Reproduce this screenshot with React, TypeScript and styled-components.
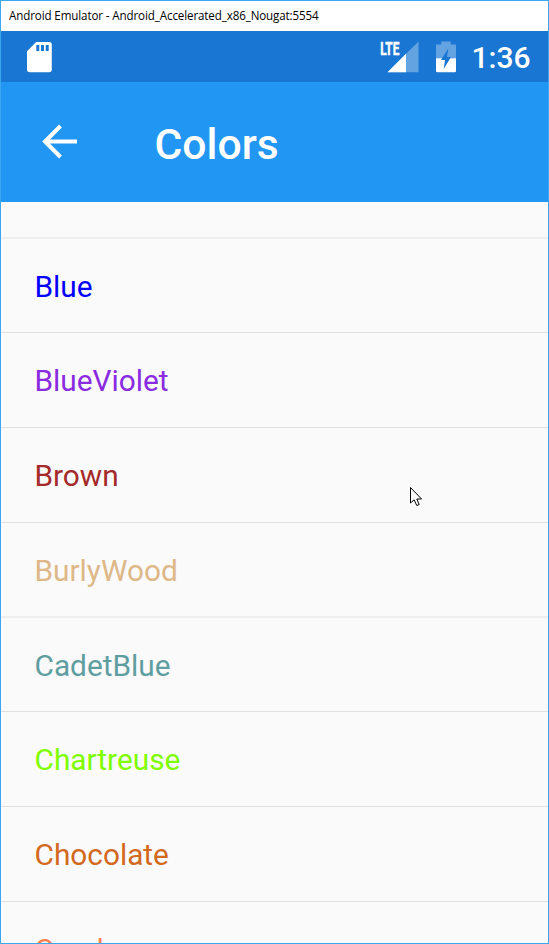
import React from "react";
import styled, { createGlobalStyle } from "styled-components";

const Global = createGlobalStyle`
  * { box-sizing: border-box; }
  html, body { margin: 0; padding: 0; overflow: hidden; }
`;
const Window = styled.main`
  position: relative; width: 549px; height: 944px; overflow: hidden;
  display: flex; flex-direction: column; background: #fafafa;
  border: 1px solid #3ba7ee; font-family: Roboto, sans-serif;
`;
const TitleBar = styled.div`
  flex: none; height: 30px; padding-left: 8px; background: #fff; color: #000;
  font: 12px/30px "Open Sans", "Noto Sans", sans-serif; white-space: nowrap;
`;
const TitleText = styled.span`
  display: inline-block; letter-spacing: -0.12px; transform: scaleX(0.966); transform-origin: 0 50%;
`;
const StatusBar = styled.div`
  flex: none; height: 51px; background: #1976d2; display: flex; align-items: center;
  padding: 0 17.5px 0 26px; color: #fff;
`;
const StatusIcons = styled.div` margin-left: auto; display: flex; align-items: center; gap: 17px; `;
const SignalIcon = styled.svg` overflow: visible; `;
const Clock = styled.span` font-size: 30px; font-weight: 500; line-height: 51px; margin: 2px 0 0 15px; `;
const AppBar = styled.header`
  flex: none; height: 120px; background: #2196f3; color: #fff; display: flex; align-items: center; padding-left: 41px;
`;
const Title = styled.h1` margin: 3px 0 0 76.5px; font-size: 42.7px; line-height: 50px; font-weight: 500; `;
const List = styled.ul` list-style: none; margin: 0; padding: 35.3px 0 0; flex: none; `;
const Row = styled.li<{ $color: string; $soft?: boolean }>`
  height: 94.78px; padding: 0 33.5px; color: ${p => p.$color};
  border-top: ${p => (p.$soft ? "2px solid #efefef" : "1px solid #e1e1e1")};
  font-size: 29.8px; line-height: ${p => (p.$soft ? "95px" : "96px")};
`;
const Pointer = styled.svg` position: absolute; left: 409px; top: 486px; `;

const colors: { name: string; color: string; soft?: boolean }[] = [
  { name: "Blue", color: "#0000ff", soft: true },
  { name: "BlueViolet", color: "#8a2be2" },
  { name: "Brown", color: "#a52a2a" },
  { name: "BurlyWood", color: "#deb887" },
  { name: "CadetBlue", color: "#5f9ea0", soft: true },
  { name: "Chartreuse", color: "#7fff00" },
  { name: "Chocolate", color: "#d2691e" },
  { name: "Coral", color: "#ff7f50" },
];

const SdCard = () => (
  <svg width="25" height="32" viewBox="0 0 25 32">
    <path fill="#fff" fillRule="evenodd" d="M9.2 1H22a2.8 2.8 0 0 1 2.8 2.8V28.5a2.8 2.8 0 0 1-2.8 2.8H2.8A2.8 2.8 0 0 1 0 28.5V10.2ZM9.3 4v6h3V4ZM14 4v6h3V4ZM18.7 4v6h3V4Z" />
  </svg>
);

const Signal = () => (
  <SignalIcon width="39" height="32" viewBox="0 0 39 32">
    <path d="M7.5 31.2 38.5.5V31.2Z" fill="#64a3e1" />
    <path d="M7.5 31.2 26 12.8V31.2Z" fill="#fff" />
    <text x="0.3" y="13.6" fill="#fff" stroke="#fff" strokeWidth="0.5" fontFamily="Roboto, sans-serif" fontSize="17.5" fontWeight="700" textLength="19" lengthAdjust="spacingAndGlyphs">LTE</text>
  </SignalIcon>
);

const Battery = () => (
  <svg width="20" height="32" viewBox="0 0 20 32">
    <path d="M5.3.5h9.4v3H20v13.7H0V3.5h5.3Z" fill="#64a3e1" />
    <path d="M0 17.2h20v12.5q0 1.5-1.5 1.5h-17Q0 31.2 0 29.7Z" fill="#fff" />
    <path d="M12.3 7.5 5 19h4l-1.3 9L15 16h-4Z" fill="#1976d2" />
  </svg>
);

export default function App() {
  return (
    <Window>
      <Global />
      <TitleBar><TitleText>Android Emulator - Android_Accelerated_x86_Nougat:5554</TitleText></TitleBar>
      <StatusBar>
        <SdCard />
        <StatusIcons><Signal /><Battery /></StatusIcons>
        <Clock>1:36</Clock>
      </StatusBar>
      <AppBar>
        <svg width="36" height="36" viewBox="0 0 36 36"><path d="M35 17.5H4M18.5 2 3 17.5l15.5 15.5" fill="none" stroke="#fff" strokeWidth="4" /></svg>
        <Title>Colors</Title>
      </AppBar>
      <List>{colors.map(c => <Row key={c.name} $color={c.color} $soft={c.soft}>{c.name}</Row>)}</List>
      <Pointer width="13" height="21" viewBox="0 0 13 21"><path d="M.5.5V16l3.6-3.2L6.8 18.5l2.4-1L6.8 12h4.7Z" fill="#fff" stroke="#000" /></Pointer>
    </Window>
  );
}
